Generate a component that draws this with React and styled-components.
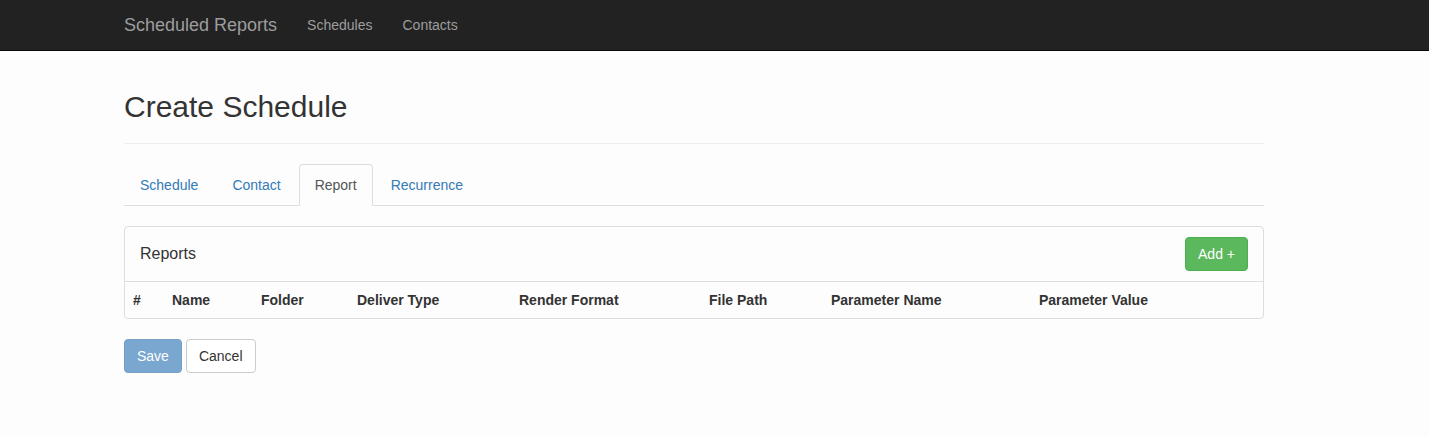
import React, { useState } from 'react';
import styled, { createGlobalStyle } from 'styled-components';

const GlobalStyle = createGlobalStyle`
  * { box-sizing: border-box; }
  body {
    margin: 0;
    background: #fdfdfd;
    font-family: "Liberation Sans", Arial, Helvetica, sans-serif;
    font-size: 14px;
    line-height: 1.42857;
    color: #333;
  }
`;

const columns = [
  { label: '#', width: 39 },
  { label: 'Name', width: 89 },
  { label: 'Folder', width: 96 },
  { label: 'Deliver Type', width: 162 },
  { label: 'Render Format', width: 190 },
  { label: 'File Path', width: 122 },
  { label: 'Parameter Name', width: 208 },
  { label: 'Parameter Value', width: 232 },
];

const tabs = ['Schedule', 'Contact', 'Report', 'Recurrence'];

const App = () => {
  const [active, setActive] = useState('Report');

  return (
    <>
      <GlobalStyle />
      <Navbar>
        <NavInner>
          <Brand href="#">Scheduled Reports</Brand>
          <NavLink href="#">Schedules</NavLink>
          <NavLink href="#">Contacts</NavLink>
        </NavInner>
      </Navbar>
      <Container>
        <PageHeader>
          <Title>Create Schedule</Title>
        </PageHeader>
        <Tabs>
          {tabs.map((t) => (
            <Tab key={t} active={t === active} onClick={() => setActive(t)}>
              {t}
            </Tab>
          ))}
        </Tabs>
        <Panel>
          <PanelHeading>
            <PanelTitle>Reports</PanelTitle>
            <Button variant="success">Add +</Button>
          </PanelHeading>
          <Table>
            <thead>
              <tr>
                {columns.map((c) => (
                  <Th key={c.label} style={{ width: c.width }}>{c.label}</Th>
                ))}
              </tr>
            </thead>
          </Table>
        </Panel>
        <Actions>
          <Button variant="primary" disabled>Save</Button>
          <Button>Cancel</Button>
        </Actions>
      </Container>
    </>
  );
};

const Navbar = styled.nav`
  height: 51px;
  background: #222;
  border-bottom: 1px solid #080808;
`;

const NavInner = styled.div`
  width: 1140px;
  margin-left: 124px;
  display: flex;
  align-items: center;
  height: 50px;
`;

const Brand = styled.a`
  font-size: 18px;
  line-height: 20px;
  color: #9d9d9d;
  text-decoration: none;
  padding: 15px 15px 15px 0;
  margin-right: 15px;
`;

const NavLink = styled.a`
  font-size: 14px;
  line-height: 20px;
  color: #9d9d9d;
  text-decoration: none;
  padding: 15px 0;
  margin-right: 30px;
`;

const Container = styled.div`
  width: 1140px;
  margin-left: 124px;
`;

const PageHeader = styled.div`
  margin-top: 39px;
  padding-bottom: 20px;
  border-bottom: 1px solid #eee;
  margin-bottom: 20px;
`;

const Title = styled.h2`
  margin: 0;
  font-size: 30px;
  font-weight: 500;
  line-height: 33px;
  color: #333;
`;

const Tabs = styled.ul`
  display: flex;
  list-style: none;
  margin: 0 0 20px;
  padding: 0;
  border-bottom: 1px solid #ddd;
`;

const Tab = styled.li`
  margin-right: 2px;
  margin-bottom: -1px;
  padding: 10px 15px;
  line-height: 20px;
  border: 1px solid ${(p) => (p.active ? '#ddd' : 'transparent')};
  border-bottom-color: transparent;
  border-radius: 4px 4px 0 0;
  background: ${(p) => (p.active ? '#fdfdfd' : 'transparent')};
  color: ${(p) => (p.active ? '#555' : '#337ab7')};
  cursor: pointer;
`;

const Panel = styled.div`
  border: 1px solid #ddd;
  border-radius: 4px;
  background: #fdfdfd;
  margin-bottom: 20px;
  overflow: hidden;
`;

const PanelHeading = styled.div`
  display: flex;
  justify-content: space-between;
  align-items: center;
  padding: 10px 15px;
  border-bottom: 1px solid #ddd;
`;

const PanelTitle = styled.h3`
  margin: 0;
  font-size: 16px;
  font-weight: 500;
  line-height: 20px;
  color: #333;
`;

const Table = styled.table`
  width: 1138px;
  border-collapse: collapse;
  table-layout: fixed;
`;

const Th = styled.th`
  text-align: left;
  font-weight: bold;
  padding: 8px;
  line-height: 20px;
  white-space: nowrap;
`;

const Actions = styled.div`
  display: flex;
  gap: 4px;
`;

const variants = {
  primary: { bg: '#337ab7', border: '#2e6da4', color: '#fff' },
  success: { bg: '#5cb85c', border: '#4cae4c', color: '#fff' },
  default: { bg: '#fff', border: '#ccc', color: '#333' },
};

const Button = styled.button`
  font-family: inherit;
  font-size: 14px;
  line-height: 20px;
  padding: 6px 12px;
  border-radius: 4px;
  border: 1px solid ${(p) => variants[p.variant || 'default'].border};
  background: ${(p) => variants[p.variant || 'default'].bg};
  color: ${(p) => variants[p.variant || 'default'].color};
  cursor: pointer;
  &:disabled {
    opacity: 0.65;
    cursor: not-allowed;
  }
`;

export default App;
